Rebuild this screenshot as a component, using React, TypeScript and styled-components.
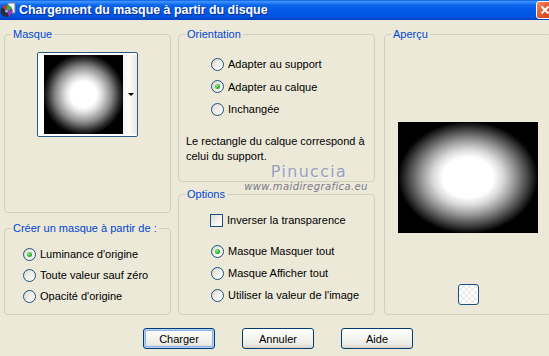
import styled, { createGlobalStyle } from 'styled-components';

const GlobalStyle = createGlobalStyle`
  html, body {
    margin: 0;
    padding: 0;
    background: #ece9d8;
  }
  body {
    width: 549px;
    height: 356px;
    overflow: hidden;
    font-family: 'Liberation Sans', Arial, sans-serif;
    font-size: 11px;
    color: #000;
  }
`;

const Window = styled.div`
  position: relative;
  width: 549px;
  height: 356px;
  display: flex;
  flex-direction: column;
  overflow: hidden;
  background: #ece9d8;
`;

const TitleBar = styled.div`
  flex: none;
  height: 20px;
  display: flex;
  align-items: center;
  background: linear-gradient(
    to bottom,
    #0a5cdb 0%,
    #3d95ff 8%,
    #0c64ea 25%,
    #0058e6 60%,
    #0052de 85%,
    #003fc0 100%
  );
`;

const TitleIcon = styled.svg`
  flex: none;
  width: 16px;
  height: 16px;
`;

const TitleText = styled.span`
  margin-left: 3px;
  color: #fff;
  font-family: 'Liberation Sans', Arial, sans-serif;
  font-weight: bold;
  font-size: 12.4px;
  text-shadow: 1px 1px 0 #0b2d8c;
  white-space: nowrap;
`;

const CloseBox = styled.div`
  flex: none;
  margin-left: auto;
  margin-right: -8px;
  width: 21px;
  height: 18px;
  box-sizing: border-box;
  border: 1px solid #fff;
  border-radius: 3px;
  background: linear-gradient(135deg, #f08a63 0%, #e0532d 50%, #c63d17 100%);
  display: flex;
  align-items: center;
  padding-left: 3px;
`;

const Body = styled.div`
  flex: 1;
  display: flex;
  flex-direction: column;
  padding: 8px 0 0 4px;
`;

const Panels = styled.div`
  display: flex;
  height: 287px;
`;

const Column = styled.div<{ $width: number; $offset: number }>`
  flex: none;
  width: ${(p) => p.$width}px;
  margin-left: ${(p) => p.$offset}px;
  display: flex;
  flex-direction: column;
  justify-content: space-between;
`;

const Group = styled.fieldset<{ $height?: number; $padTop?: number }>`
  margin: 0;
  min-width: 0;
  box-sizing: border-box;
  height: ${(p) => (p.$height ? `${p.$height}px` : '100%')};
  padding: ${(p) => p.$padTop || 0}px 0 0;
  border: 1px solid #d0d0bf;
  border-radius: 4px;
`;

const Legend = styled.legend`
  margin-left: 6px;
  padding: 0 2px;
  color: #0046d5;
  font-size: 11px;
  line-height: 13px;
`;

const Combo = styled.div`
  width: 101px;
  height: 85px;
  box-sizing: border-box;
  margin: 0 auto;
  padding: 2px 0 2px 6px;
  border: 1px solid #2a5a8a;
  border-radius: 2px;
  background: #fff;
  display: flex;
`;

const MaskThumb = styled.div`
  width: 79px;
  height: 79px;
  background: radial-gradient(
    circle at 50% 50%,
    #fff 0,
    #fff 13px,
    #d8d8d8 19px,
    #8a8a8a 28px,
    #2e2e2e 36px,
    #000 41px
  );
`;

const DropArea = styled.div`
  flex: 1;
  display: flex;
  align-items: center;
  justify-content: center;
  padding-left: 2px;
  background: linear-gradient(to right, #f4f3ee, #fdfdfb 40%, #e9e8e1);
`;

const Arrow = styled.span`
  width: 0;
  height: 0;
  border-left: 3px solid transparent;
  border-right: 3px solid transparent;
  border-top: 3px solid #000;
`;

const OptionList = styled.div<{ $gap: number; $indent: number; $top?: number }>`
  display: flex;
  flex-direction: column;
  gap: ${(p) => p.$gap}px;
  margin-left: ${(p) => p.$indent}px;
  margin-top: ${(p) => p.$top || 0}px;
`;

const OptionRow = styled.label`
  display: flex;
  align-items: center;
  gap: 4px;
  height: 16px;
  white-space: nowrap;
`;

const RadioCircle = styled.span<{ $checked?: boolean }>`
  flex: none;
  width: 13px;
  height: 13px;
  box-sizing: border-box;
  border-radius: 50%;
  border: 1px solid #1c5180;
  background: linear-gradient(135deg, #d9d7cc 0%, #f3f2ec 55%, #fff 100%);
  display: flex;
  align-items: center;
  justify-content: center;

  &::after {
    content: '';
    width: 5px;
    height: 5px;
    border-radius: 50%;
    background: ${(p) =>
      p.$checked
        ? 'radial-gradient(circle at 35% 35%, #9be99b 0%, #2fb12f 55%, #1a8a1a 100%)'
        : 'transparent'};
  }
`;

const CheckSquare = styled.span`
  flex: none;
  width: 13px;
  height: 13px;
  box-sizing: border-box;
  border: 1px solid #1c5180;
  background: linear-gradient(135deg, #dcdcd5 0%, #f3f2ec 55%, #fff 100%);
`;

const Note = styled.p`
  margin: 17px 0 0 7px;
  line-height: 15px;
`;

const PreviewPane = styled.div`
  display: flex;
  flex-direction: column;
  align-items: center;
  padding-top: 81px;
`;

const PreviewImage = styled.div`
  width: 140px;
  height: 111px;
  background: radial-gradient(
    ellipse 70px 56px at 50% 50%,
    #fff 0%,
    #fff 36%,
    #d9d9d9 50%,
    #9a9a9a 66%,
    #4a4a4a 84%,
    #000 100%
  );
`;

const SwatchButton = styled.div`
  margin-top: 51px;
  width: 21px;
  height: 21px;
  box-sizing: border-box;
  border: 1px solid #1c5180;
  border-radius: 3px;
  background-color: #fff;
  background-image: linear-gradient(45deg, #ececec 25%, transparent 25%, transparent 75%, #ececec 75%),
    linear-gradient(45deg, #ececec 25%, transparent 25%, transparent 75%, #ececec 75%);
  background-size: 6px 6px;
  background-position: 0 0, 3px 3px;
`;

const Footer = styled.div`
  display: flex;
  justify-content: center;
  gap: 27px;
  margin-top: 13px;
  padding-left: 3px;
`;

const Button = styled.button<{ $default?: boolean }>`
  width: 72px;
  height: 21px;
  box-sizing: border-box;
  padding: 0;
  border: 1px solid #003c74;
  border-radius: 3px;
  background: linear-gradient(to bottom, #fff 0%, #f5f5f1 40%, #ecebe5 80%, #d8d3c8 100%);
  font-family: 'Liberation Sans', Arial, sans-serif;
  font-size: 11px;
  color: #000;
  box-shadow: ${(p) =>
    p.$default ? 'inset 0 0 0 1px #b6d0f7, inset 0 0 0 2px #8fb0ec' : 'none'};
`;

const Watermark = styled.div`
  position: absolute;
  left: 245px;
  top: 162px;
  width: 122px;
  display: flex;
  flex-direction: column;
  align-items: center;
  pointer-events: none;
`;

const WatermarkName = styled.span`
  margin-left: 6px;
  font-family: 'DejaVu Sans', sans-serif;
  font-size: 16px;
  letter-spacing: 1.3px;
  line-height: 19px;
  color: #97a0bb;
  text-shadow: 1px 1px 0 #f6f5ef;
`;

const WatermarkUrl = styled.span`
  font-family: 'DejaVu Sans', sans-serif;
  font-size: 10px;
  font-style: italic;
  letter-spacing: 0.4px;
  line-height: 12px;
  color: #7b7b88;
  white-space: nowrap;
`;

type Option = { label: string; checked?: boolean };

const orientation: Option[] = [
  { label: 'Adapter au support' },
  { label: 'Adapter au calque', checked: true },
  { label: 'Inchangée' },
];

const source: Option[] = [
  { label: "Luminance d'origine", checked: true },
  { label: 'Toute valeur sauf zéro' },
  { label: "Opacité d'origine" },
];

const layerOptions: Option[] = [
  { label: 'Masque Masquer tout', checked: true },
  { label: 'Masque Afficher tout' },
  { label: "Utiliser la valeur de l'image" },
];

const Radios = ({
  items,
  gap,
  indent,
  top,
}: {
  items: Option[];
  gap: number;
  indent: number;
  top?: number;
}) => (
  <OptionList $gap={gap} $indent={indent} $top={top}>
    {items.map((item) => (
      <OptionRow key={item.label}>
        <RadioCircle $checked={item.checked} />
        {item.label}
      </OptionRow>
    ))}
  </OptionList>
);

const App = () => {
  return (
    <Window>
      <GlobalStyle />
      <TitleBar>
        <TitleIcon viewBox="0 0 16 16">
          <rect x="8" y="1" width="7" height="10" fill="#f4f4f4" stroke="#6a7fa8" strokeWidth="1" />
          <circle cx="6.5" cy="9" r="6" fill="#2a2a3a" />
          <path d="M6.5 9 L6.5 3 A6 6 0 0 1 12 7 Z" fill="#3cb043" />
          <path d="M6.5 9 L12 7 A6 6 0 0 1 9 14.5 Z" fill="#8a3cc0" />
          <path d="M6.5 9 L2 5 A6 6 0 0 1 6.5 3 Z" fill="#c03c3c" />
          <circle cx="6.5" cy="9" r="1.6" fill="#9ad" />
        </TitleIcon>
        <TitleText>Chargement du masque à partir du disque</TitleText>
        <CloseBox>
          <svg width="10" height="10" viewBox="0 0 10 10">
            <path d="M1.5 1.5 L8.5 8.5 M8.5 1.5 L1.5 8.5" stroke="#fff" strokeWidth="2" />
          </svg>
        </CloseBox>
      </TitleBar>

      <Body>
        <Panels>
          <Column $width={167} $offset={0}>
            <Group $height={185} $padTop={11}>
              <Legend>Masque</Legend>
              <Combo>
                <MaskThumb />
                <DropArea>
                  <Arrow />
                </DropArea>
              </Combo>
            </Group>
            <Group $height={93} $padTop={11}>
              <Legend>Créer un masque à partir de :</Legend>
              <Radios items={source} gap={5} indent={18} />
            </Group>
          </Column>

          <Column $width={197} $offset={7}>
            <Group $height={154} $padTop={15}>
              <Legend>Orientation</Legend>
              <Radios items={orientation} gap={6.5} indent={32} />
              <Note>
                Le rectangle du calque correspond à
                <br />
                celui du support.
              </Note>
            </Group>
            <Group $height={127} $padTop={11}>
              <Legend>Options</Legend>
              <OptionList $gap={0} $indent={31}>
                <OptionRow>
                  <CheckSquare />
                  Inverser la transparence
                </OptionRow>
              </OptionList>
              <Radios items={layerOptions} gap={6} indent={32} top={15} />
            </Group>
          </Column>

          <Column $width={168} $offset={9}>
            <Group>
              <Legend>Aperçu</Legend>
              <PreviewPane>
                <PreviewImage />
                <SwatchButton />
              </PreviewPane>
            </Group>
          </Column>
        </Panels>

        <Footer>
          <Button $default>Charger</Button>
          <Button>Annuler</Button>
          <Button>Aide</Button>
        </Footer>
      </Body>

      <Watermark>
        <WatermarkName>Pinuccia</WatermarkName>
        <WatermarkUrl>www.maidiregrafica.eu</WatermarkUrl>
      </Watermark>
    </Window>
  );
};

export default App;
